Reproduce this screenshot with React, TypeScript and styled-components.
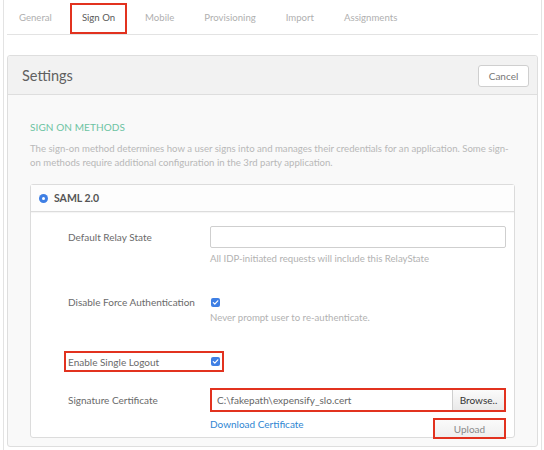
import React from 'react';
import styled, { createGlobalStyle } from 'styled-components';

const Global = createGlobalStyle`
  html, body { margin: 0; padding: 0; background: #fff; overflow: hidden; }
  body { font-family: Lato, "Liberation Sans", sans-serif; -webkit-font-smoothing: antialiased; }
  * { box-sizing: border-box; }
`;

const RED = '#e2321f';

const Frame = styled.div`
  margin: 0 2px 0 3px;
  height: 450px;
  border-left: 1px solid #e3e3e3;
  border-right: 1px solid #e3e3e3;
  padding: 0 3px;
`;

const TabBar = styled.div`
  display: flex;
  align-items: flex-start;
  gap: 6px;
  height: 35px;
  border-bottom: 1px solid #e3e3e3;
`;

const Tab = styled.div<{ $active?: boolean }>`
  height: 31px;
  margin-top: 3px;
  padding: 0 10px 2px;
  display: flex;
  align-items: center;
  border: 2px solid ${(p) => (p.$active ? RED : 'transparent')};
  font-size: 9.6px;
  color: ${(p) => (p.$active ? '#5a5a5a' : '#b0b0b0')};
`;

const Panel = styled.div`
  margin-top: 20px;
  border: 1px solid #dedede;
  border-radius: 3px;
  background: #f9f9f9;
  padding-bottom: 8px;
`;

const PanelHeader = styled.div`
  height: 39px;
  display: flex;
  align-items: center;
  justify-content: space-between;
  padding: 0 8px 0 14px;
  background: #f2f2f2;
  border-bottom: 1px solid #dedede;
  border-radius: 3px 3px 0 0;
`;

const PanelTitle = styled.div`
  font-size: 14.5px;
  color: #606060;
`;

const CancelButton = styled.div`
  width: 51px;
  height: 22px;
  display: flex;
  align-items: center;
  justify-content: center;
  background: #fff;
  border: 1px solid #cfcfcf;
  border-radius: 3px;
  font-size: 10px;
  color: #777;
  margin-top: 1px;
`;

const PanelBody = styled.div`
  padding: 0 22px;
`;

const SectionTitle = styled.div`
  margin-top: 26px;
  font-size: 10px;
  line-height: 12px;
  color: #6cc3a2;
  letter-spacing: 0.1px;
`;

const Description = styled.div`
  margin-top: 9px;
  font-size: 9.6px;
  line-height: 13.5px;
  color: #b8b8b8;
`;

const MethodBox = styled.div`
  margin-top: 15px;
  background: #fff;
  border: 1px solid #dcdcdc;
  border-radius: 3px;
`;

const MethodHeader = styled.div`
  height: 27px;
  display: flex;
  align-items: center;
  gap: 6px;
  padding-left: 8px;
  border-bottom: 1px solid #dcdcdc;
  background: #fdfdfd;
  box-shadow: 0 1px 1px rgba(0, 0, 0, 0.04);
`;

const Radio = styled.span`
  width: 9px;
  height: 9px;
  border-radius: 50%;
  background: #3f7fe4;
  display: flex;
  align-items: center;
  justify-content: center;
  &::after {
    content: '';
    width: 3px;
    height: 3px;
    border-radius: 50%;
    background: #fff;
  }
`;

const MethodName = styled.span`
  font-size: 10.5px;
  font-weight: 700;
  color: #555;
`;

const MethodContent = styled.div`
  padding: 14px 8px 0 37px;
`;

const Row = styled.div<{ $mt?: number }>`
  display: flex;
  align-items: center;
  margin-top: ${(p) => p.$mt ?? 0}px;
`;

const Label = styled.div`
  width: 142px;
  flex: none;
  font-size: 10px;
  line-height: 12px;
  color: #6a6a6a;
`;

const TextInput = styled.div`
  flex: 1;
  height: 22px;
  border: 1px solid #cfcfcf;
  border-radius: 2px;
  background: #fff;
`;

const Helper = styled.div<{ $mt?: number }>`
  margin-top: ${(p) => p.$mt ?? 0}px;
  padding-left: 142px;
  font-size: 9.6px;
  line-height: 12px;
  color: #b2b2b2;
`;

const CheckBox = styled.span`
  width: 9px;
  height: 9px;
  margin-left: 1px;
  border-radius: 2px;
  background: #3f7fe4;
  display: flex;
  align-items: center;
  justify-content: center;
`;

const Highlight = styled.div`
  display: inline-flex;
  align-items: center;
  height: 21px;
  margin-left: -4px;
  padding: 0 2px;
  border: 2px solid ${RED};
`;

const FileField = styled.div`
  flex: 1;
  height: 24px;
  display: flex;
  border: 2px solid ${RED};
  background: #fff;
`;

const FileText = styled.div`
  flex: 1;
  display: flex;
  align-items: center;
  padding-left: 5px;
  font-size: 10px;
  color: #666;
`;

const BrowseButton = styled.div`
  width: 52px;
  display: flex;
  align-items: center;
  justify-content: center;
  border-left: 1px solid #cfcfcf;
  background: linear-gradient(#fbfbfb, #e9e9e9);
  font-size: 10px;
  color: #333;
`;

const Actions = styled.div`
  margin-top: 6px;
  padding-left: 142px;
  display: flex;
  justify-content: space-between;
  align-items: flex-start;
`;

const Link = styled.a`
  font-size: 10px;
  line-height: 12px;
  color: #2f86d2;
  text-decoration: none;
`;

const UploadButton = styled.div`
  width: 73px;
  height: 21px;
  margin-bottom: -2px;
  display: flex;
  align-items: center;
  justify-content: center;
  border: 2px solid ${RED};
  background: linear-gradient(#fafafa, #efefef);
  font-size: 10px;
  color: #8a8a8a;
  position: relative;
`;

const Check = () => (
  <svg width="7" height="7" viewBox="0 0 7 7">
    <path d="M1.3 3.6 L2.8 5.1 L5.8 1.8" fill="none" stroke="#fff" strokeWidth="1.2" strokeLinecap="round" strokeLinejoin="round" />
  </svg>
);

const tabs = ['General', 'Sign On', 'Mobile', 'Provisioning', 'Import', 'Assignments'];

export default function App() {
  return (
    <>
      <Global />
      <Frame>
        <TabBar>
          {tabs.map((t) => (
            <Tab key={t} $active={t === 'Sign On'}>
              {t}
            </Tab>
          ))}
        </TabBar>
        <Panel>
          <PanelHeader>
            <PanelTitle>Settings</PanelTitle>
            <CancelButton>Cancel</CancelButton>
          </PanelHeader>
          <PanelBody>
            <SectionTitle>SIGN ON METHODS</SectionTitle>
            <Description>
              The sign-on method determines how a user signs into and manages their credentials for an application. Some sign-on methods require additional configuration in the 3rd party application.
            </Description>
            <MethodBox>
              <MethodHeader>
                <Radio />
                <MethodName>SAML 2.0</MethodName>
              </MethodHeader>
              <MethodContent>
                <Row>
                  <Label>Default Relay State</Label>
                  <TextInput />
                </Row>
                <Helper $mt={5}>All IDP-initiated requests will include this RelayState</Helper>
                <Row $mt={31}>
                  <Label>Disable Force Authentication</Label>
                  <CheckBox>
                    <Check />
                  </CheckBox>
                </Row>
                <Helper $mt={4}>Never prompt user to re-authenticate.</Helper>
                <Row $mt={27}>
                  <Highlight>
                    <Label>Enable Single Logout</Label>
                    <CheckBox>
                      <Check />
                    </CheckBox>
                  </Highlight>
                </Row>
                <Row $mt={16}>
                  <Label>Signature Certificate</Label>
                  <FileField>
                    <FileText>C:\fakepath\expensify_slo.cert</FileText>
                    <BrowseButton>Browse..</BrowseButton>
                  </FileField>
                </Row>
                <Actions>
                  <Link href="#">Download Certificate</Link>
                  <UploadButton>Upload</UploadButton>
                </Actions>
              </MethodContent>
            </MethodBox>
          </PanelBody>
        </Panel>
      </Frame>
    </>
  );
}
